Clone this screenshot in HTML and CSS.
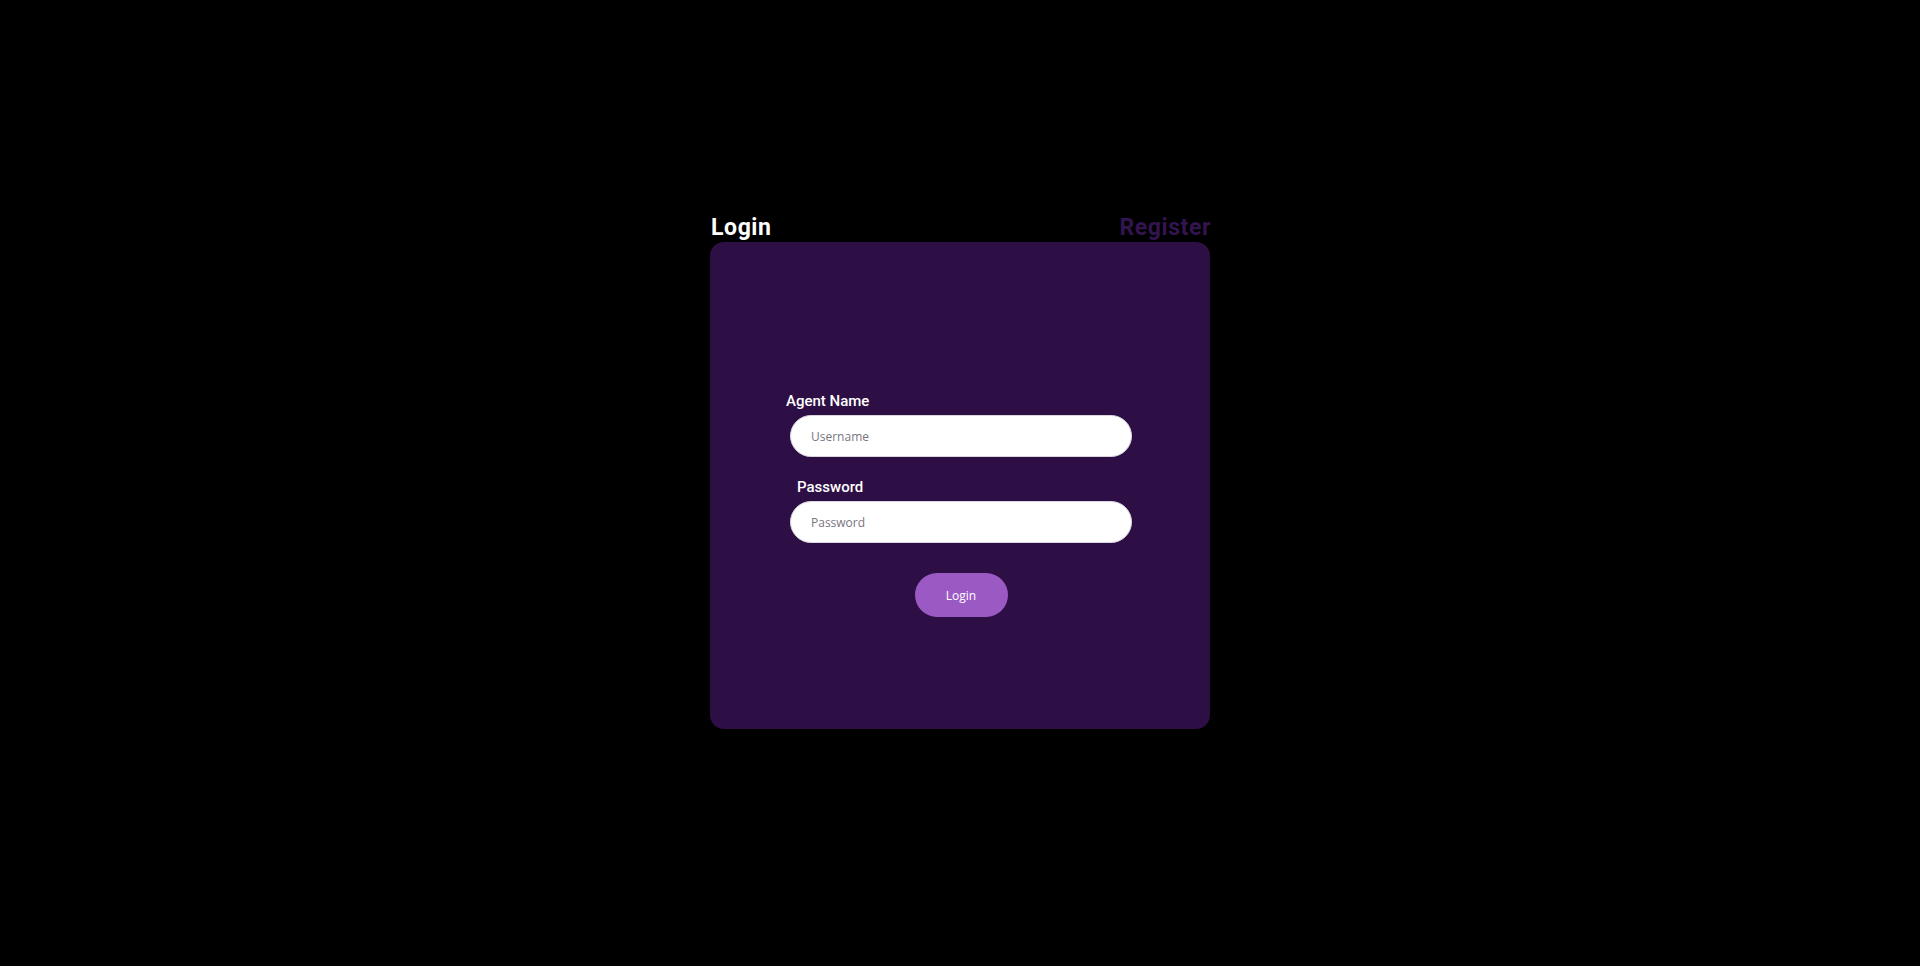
FILE: index.html
```html
<!DOCTYPE html>
<html>
<head>
<meta charset="utf-8">
<link rel="stylesheet" href="styles.css">
</head>
<body>
<div class="page">
  <div class="auth">
    <div class="tabs">
      <span class="tab tab-active">Login</span>
      <span class="tab tab-inactive">Register</span>
    </div>
    <div class="card">
      <form class="form">
        <label class="label label-agent">Agent Name</label>
        <input class="field" type="text" placeholder="Username">
        <label class="label label-pass">Password</label>
        <input class="field" type="password" placeholder="Password">
        <button class="btn" type="button">Login</button>
      </form>
    </div>
  </div>
</div>
</body>
</html>
```
FILE: styles.css
```css
html, body {
  margin: 0;
  padding: 0;
  background: #000;
  height: 100%;
}
.page {
  height: 966px;
  display: flex;
  justify-content: center;
  padding-top: 214px;
  box-sizing: border-box;
  font-family: Roboto, "Liberation Sans", sans-serif;
}
.auth {
  width: 500px;
}
.tabs {
  display: flex;
  justify-content: space-between;
  height: 28px;
  line-height: 28px;
}
.tab {
  font-size: 23px;
  font-weight: 700;
  letter-spacing: 0.6px;
}
.tab-active { color: #fff; padding-left: 1px; }
.tab-inactive { color: #32144f; margin-right: -1px; }
.card {
  background: #2d0e45;
  border-radius: 14px;
  height: 487px;
  box-sizing: border-box;
  padding-top: 150px;
}
.form {
  display: flex;
  flex-direction: column;
  width: 342px;
  margin-left: 80px;
}
.label {
  color: #fff;
  font-size: 15px;
  font-weight: 500;
  line-height: 18px;
  margin-bottom: 5px;
}
.label-agent { margin-left: -4px; }
.label-pass { margin-left: 7px; margin-top: 21px; }
.field {
  height: 42px;
  box-sizing: border-box;
  border: 1px solid #d9d5dd;
  border-radius: 21px;
  background: #fff;
  padding: 0 0 0 20px;
  font-family: "Open Sans", sans-serif;
  font-size: 12px;
  color: #333;
  outline: none;
}
.field::placeholder { color: #7a7480; }
.btn {
  align-self: center;
  margin-top: 30px;
  width: 93px;
  height: 44px;
  border: none;
  border-radius: 22px;
  background: #9b59c4;
  color: #fff;
  font-family: "Open Sans", sans-serif;
  font-size: 12px;
  cursor: pointer;
}
```
